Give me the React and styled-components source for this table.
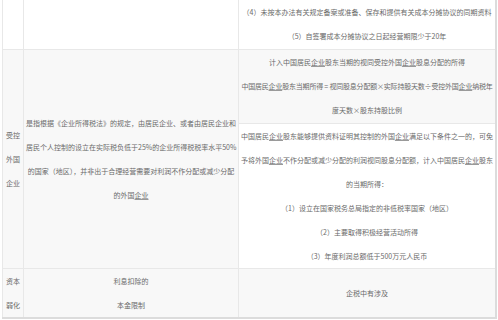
import React from 'react'
import styled, { createGlobalStyle } from 'styled-components'

const GlobalStyle = createGlobalStyle`
  body {
    margin: 0;
    background: #fff;
    font-family: "Noto Sans CJK SC", "Noto Sans", sans-serif;
  }
`

const Table = styled.table`
  margin-left: 2px;
  width: 495px;
  border-collapse: collapse;
  table-layout: fixed;
  border-right: 2px solid #dcdcdc;
  border-bottom: 2px solid #dcdcdc;
`

const Cell = styled.td`
  border: 1px solid #e8e8e8;
  border-top: ${p => (p.$noTop ? 'none' : '1px solid #e8e8e8')};
  background: ${p => (p.$gray ? '#f8f8f8' : '#fff')};
  height: ${p => p.$h}px;
  padding: 0 2px;
  box-sizing: border-box;
  text-align: center;
  vertical-align: middle;
  font-size: 7px;
  line-height: 24px;
  color: #6a6a6a;
  overflow: visible;
`

const Line = styled.div`
  white-space: nowrap;
  letter-spacing: ${p => (p.$tight ? '-0.2px' : 'normal')};
`

const Kw = styled.span`
  text-decoration: underline;
  text-decoration-color: #9a9a9a;
  text-underline-offset: 1px;
`

function App() {
  return (
    <>
      <GlobalStyle />
      <Table>
        <colgroup>
          <col style={{ width: 21 }} />
          <col style={{ width: 215 }} />
          <col />
        </colgroup>
        <tbody>
          <tr>
            <Cell $noTop $h={49} />
            <Cell $noTop />
            <Cell $noTop>
              <Line>（4）未按本办法有关规定备案或准备、保存和提供有关成本分摊协议的同期资料</Line>
              <Line>（5）自签署成本分摊协议之日起经营期限少于20年</Line>
            </Cell>
          </tr>
          <tr>
            <Cell $gray rowSpan={2}>
              <Line>受控</Line>
              <Line>外国</Line>
              <Line>企业</Line>
            </Cell>
            <Cell $gray rowSpan={2}>
              <Line>是指根据《企业所得税法》的规定，由居民企业、或者由居民企业和</Line>
              <Line>居民个人控制的设立在实际税负低于25%的企业所得税税率水平50%</Line>
              <Line>的国家（地区），并非出于合理经营需要对利润不作分配或减少分配</Line>
              <Line>的外国<Kw>企业</Kw></Line>
            </Cell>
            <Cell $gray $h={74}>
              <Line>计入中国居民<Kw>企业</Kw>股东当期的视同受控外国<Kw>企业</Kw>股息分配的所得</Line>
              <Line $tight>中国居民<Kw>企业</Kw>股东当期所得 = 视同股息分配额×实际持股天数÷受控外国<Kw>企业</Kw>纳税年</Line>
              <Line>度天数×股东持股比例</Line>
            </Cell>
          </tr>
          <tr>
            <Cell $h={145}>
              <Line>中国居民<Kw>企业</Kw>股东能够提供资料证明其控制的外国<Kw>企业</Kw>满足以下条件之一的，可免</Line>
              <Line>予将外国<Kw>企业</Kw>不作分配或减少分配的利润视同股息分配额，计入中国居民<Kw>企业</Kw>股东</Line>
              <Line>的当期所得：</Line>
              <Line>（1）设立在国家税务总局指定的非低税率国家（地区）</Line>
              <Line>（2）主要取得积极经营活动所得</Line>
              <Line>（3）年度利润总额低于500万元人民币</Line>
            </Cell>
          </tr>
          <tr>
            <Cell $gray $h={48}>
              <Line>资本</Line>
              <Line>弱化</Line>
            </Cell>
            <Cell $gray>
              <Line>利息扣除的</Line>
              <Line>本金限制</Line>
            </Cell>
            <Cell $gray>
              <Line>企税中有涉及</Line>
            </Cell>
          </tr>
        </tbody>
      </Table>
    </>
  )
}

export default App
